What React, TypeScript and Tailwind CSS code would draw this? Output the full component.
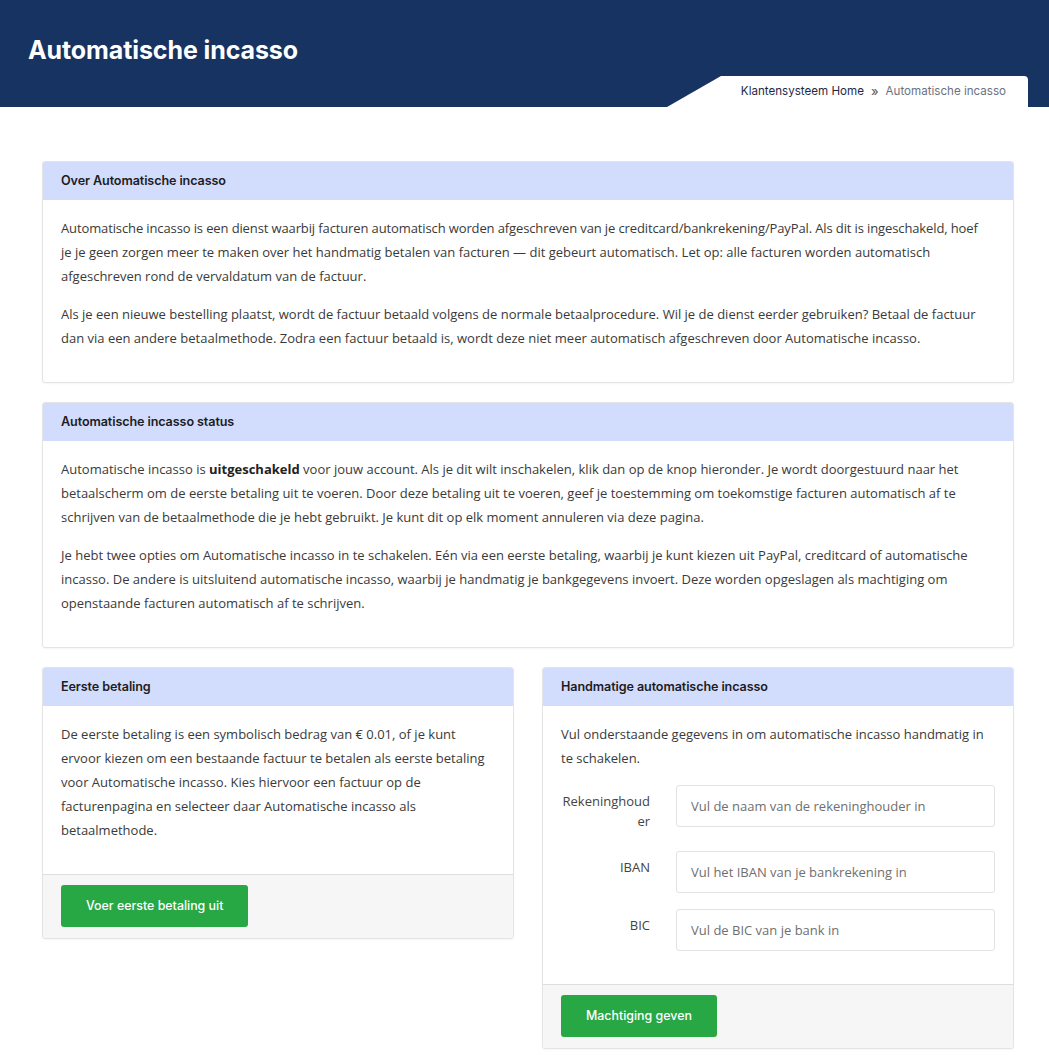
import React from "react";

const head = { fontFamily: "Inter, 'Liberation Sans', sans-serif" };
const body = { fontFamily: "'Open Sans', 'Liberation Sans', sans-serif" };

function Panel({ title, children, footer }: { title: string; children: React.ReactNode; footer?: React.ReactNode }) {
  return (
    <div className="border border-[#e4e4e4] rounded-[3px] bg-white shadow-[0_1px_2px_rgba(0,0,0,0.04)] overflow-hidden">
      <div className="h-[38px] bg-[#d2dcfd] px-[18px] flex items-center">
        <h3 style={head} className="text-[12.6px] font-semibold text-[#1d1d1f] tracking-[-0.1px]">
          {title}
        </h3>
      </div>
      <div style={body} className="px-[18px] pt-[16px] pb-[18px] text-[13px] leading-[24px] text-[#3a3a3a]">
        {children}
      </div>
      {footer && (
        <div className="bg-[#f6f6f6] border-t border-[#dedede] px-[18px] pt-[10px] pb-[11px]">{footer}</div>
      )}
    </div>
  );
}

function GreenButton({ label }: { label: string }) {
  return (
    <button
      style={head}
      className="h-[42px] px-[25px] rounded-[3px] bg-[#28a745] text-white text-[12.4px] font-medium"
    >
      {label}
    </button>
  );
}

function Field({ label, placeholder, last }: { label: string; placeholder: string; last?: boolean }) {
  return (
    <div className={last ? "flex mb-[15px]" : "flex mb-[16px]"}>
      <label className="w-[89px] shrink-0 text-right pt-[6px] pb-[4px] leading-[20px] text-[13px] text-[#444] break-all">
        {label}
      </label>
      <input
        placeholder={placeholder}
        style={body}
        className="ml-[26px] flex-1 h-[42px] border border-[#e3e3e3] rounded-[3px] px-[14px] text-[13px] placeholder:text-[#6f6f6f] outline-none"
      />
    </div>
  );
}

export default function App() {
  return (
    <div className="min-h-screen bg-white">
      <header className="bg-[#163362] pt-[34px]">
        <h1 style={head} className="pl-[28px] text-[25px] leading-[32px] font-bold text-white tracking-[-0.1px]">
          Automatische incasso
        </h1>
        <div className="flex justify-end pr-[21px] mt-[10px]">
          <svg width="54" height="31" viewBox="0 0 54 31" className="block">
            <polygon points="0,31 54,0 54,31" fill="#ffffff" />
          </svg>
          <div
            style={head}
            className="h-[31px] bg-white rounded-tr-[4px] pl-[20px] pr-[22px] flex items-center text-[11.6px]"
          >
            <span className="text-[#1e2a44]">Klantensysteem Home</span>
            <span className="mx-[7px] text-[#555] text-[13px]">»</span>
            <span className="text-[#6b7280]">Automatische incasso</span>
          </div>
        </div>
      </header>

      <main className="ml-[42px] w-[972px] pt-[54px] pb-[8px] flex flex-col gap-[19px]">
        <Panel title="Over Automatische incasso">
          <p className="mb-[14px]">
            <span className="tracking-[-0.12px] whitespace-nowrap">
              Automatische incasso is een dienst waarbij facturen automatisch worden afgeschreven van je
              creditcard/bankrekening/PayPal. Als dit is ingeschakeld, hoef
            </span>
            <br />
            je je geen zorgen meer te maken over het handmatig betalen van facturen — dit gebeurt automatisch. Let op:
            alle facturen worden automatisch afgeschreven rond de vervaldatum van de factuur.
          </p>
          <p className="mb-[14px]">
            Als je een nieuwe bestelling plaatst, wordt de factuur betaald volgens de normale betaalprocedure. Wil je de
            dienst eerder gebruiken? Betaal de factuur dan via een andere betaalmethode. Zodra een factuur betaald is,
            wordt deze niet meer automatisch afgeschreven door Automatische incasso.
          </p>
        </Panel>

        <Panel title="Automatische incasso status">
          <p className="mb-[14px]">
            Automatische incasso is <strong className="font-bold text-[#222]">uitgeschakeld</strong> voor jouw account.
            Als je dit wilt inschakelen, klik dan op de knop hieronder. Je wordt doorgestuurd naar het betaalscherm om de
            eerste betaling uit te voeren. Door deze betaling uit te voeren, geef je toestemming om toekomstige facturen
            automatisch af te schrijven van de betaalmethode die je hebt gebruikt. Je kunt dit op elk moment annuleren
            via deze pagina.
          </p>
          <p className="mb-[14px]">
            Je hebt twee opties om Automatische incasso in te schakelen. Eén via een eerste betaling, waarbij je kunt
            kiezen uit PayPal, creditcard of automatische incasso. De andere is uitsluitend automatische incasso, waarbij
            je handmatig je bankgegevens invoert. Deze worden opgeslagen als machtiging om openstaande facturen
            automatisch af te schrijven.
          </p>
        </Panel>

        <div className="flex items-start gap-[28px]">
          <div className="w-[472px]">
            <Panel title="Eerste betaling" footer={<GreenButton label="Voer eerste betaling uit" />}>
              <p className="mb-[14px]">
                De eerste betaling is een symbolisch bedrag van € 0.01, of je kunt ervoor kiezen om een bestaande factuur
                te betalen als eerste betaling voor Automatische incasso. Kies hiervoor een factuur op de facturenpagina
                en selecteer daar Automatische incasso als betaalmethode.
              </p>
            </Panel>
          </div>
          <div className="w-[472px]">
            <Panel title="Handmatige automatische incasso" footer={<GreenButton label="Machtiging geven" />}>
              <p className="mb-[15px]">
                Vul onderstaande gegevens in om automatische incasso handmatig in te schakelen.
              </p>
              <Field label="Rekeninghouder" placeholder="Vul de naam van de rekeninghouder in" />
              <Field label="IBAN" placeholder="Vul het IBAN van je bankrekening in" />
              <Field label="BIC" placeholder="Vul de BIC van je bank in" last />
            </Panel>
          </div>
        </div>
      </main>
    </div>
  );
}
